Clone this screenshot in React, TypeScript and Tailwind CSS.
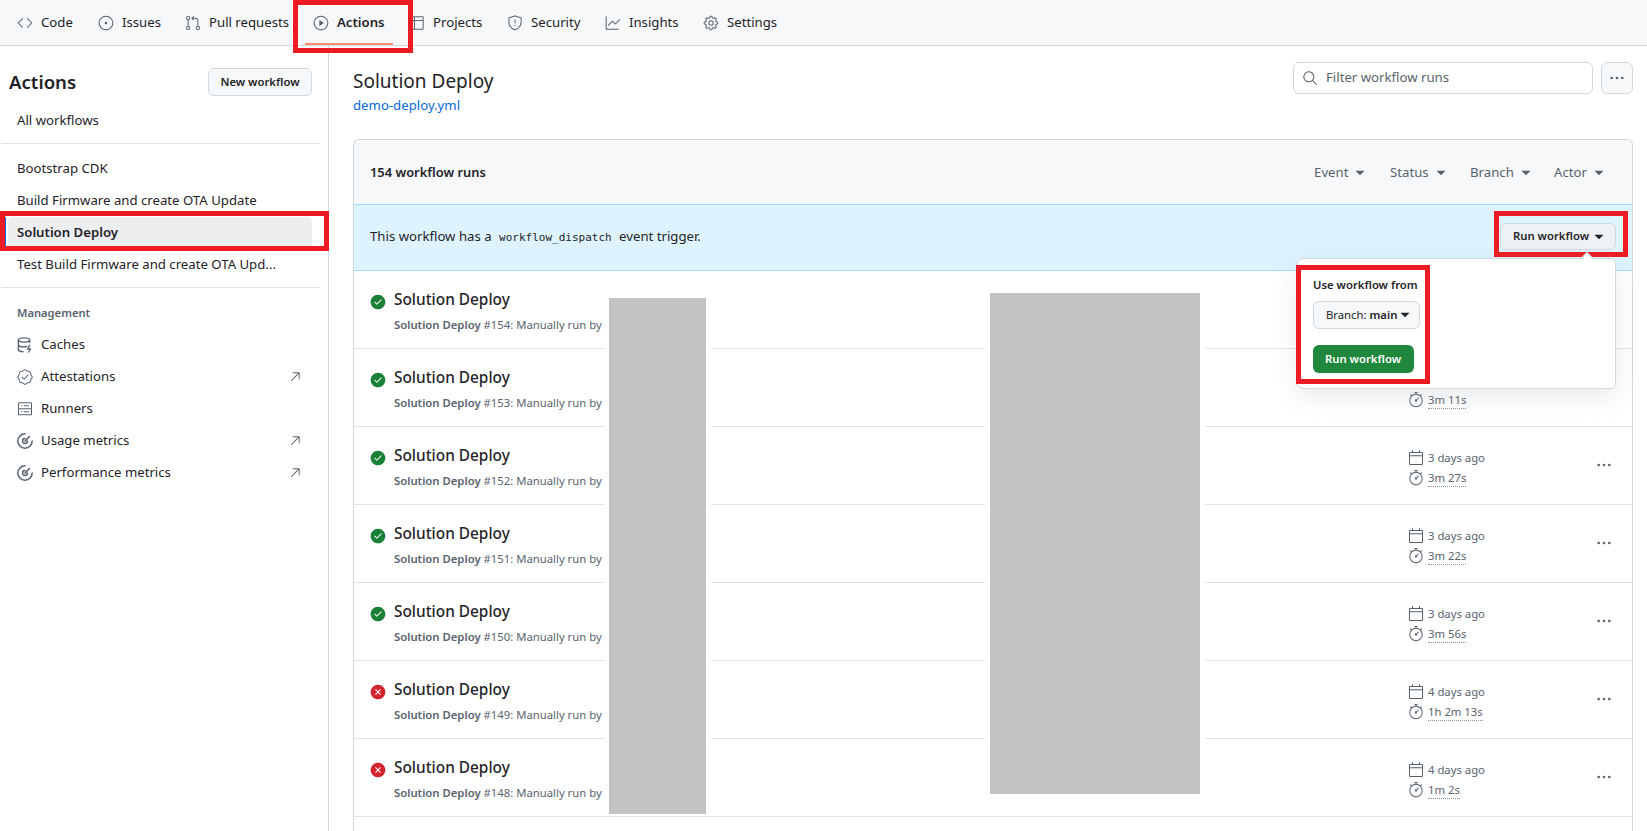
import type { ReactNode } from "react";
import {
  GoArrowUpRight, GoCalendar, GoCheckCircleFill, GoCode, GoGear, GoGitPullRequest, GoGraph,
  GoIssueOpened, GoKebabHorizontal, GoPlay, GoSearch, GoServer, GoShield, GoStopwatch, GoTable,
  GoTriangleDown, GoVerified, GoXCircleFill,
} from "react-icons/go";

function CacheIcon() {
  return (
    <svg width="16" height="16" viewBox="0 0 16 16" fill="none" stroke="currentColor" strokeWidth="1.4" strokeLinecap="round">
      <ellipse cx="7" cy="3" rx="5.6" ry="2.1" />
      <path d="M1.4 3v9.6c0 1.2 2 2.1 4.6 2.1M1.4 7.8c0 1.2 2.3 2.1 5.2 2.1 1.2 0 2.4-.2 3.3-.5M12.6 3v2.6" />
      <path d="M12.8 8.2 10.4 12h3.2l-2 3" strokeWidth="1.3" strokeLinejoin="round" />
    </svg>
  );
}

function MeterIcon() {
  return (
    <svg width="16" height="16" viewBox="0 0 16 16" fill="none" stroke="currentColor" strokeWidth="1.5" strokeLinecap="round">
      <path d="M15.2 8A7.2 7.2 0 1 1 8 .8" />
      <path d="M10.4 8A2.4 2.4 0 1 1 8 5.6" />
      <path d="M8 8 12.4 3.6" />
    </svg>
  );
}

const tabs = [
  { label: "Code", icon: <GoCode size={16} />, width: "w-[73px]" },
  { label: "Issues", icon: <GoIssueOpened size={16} />, width: "w-[79px]" },
  { label: "Pull requests", icon: <GoGitPullRequest size={16} />, width: "w-[120px]" },
  { label: "Actions", icon: <GoPlay size={16} />, width: "w-[88px]", active: true },
  { label: "Projects", icon: <GoTable size={16} />, width: "w-[90px]" },
  { label: "Security", icon: <GoShield size={16} />, width: "w-[90px]" },
  { label: "Insights", icon: <GoGraph size={16} />, width: "w-[90px]" },
  { label: "Settings", icon: <GoGear size={16} />, width: "w-[90px]" },
];

const workflows = ["Bootstrap CDK", "Build Firmware and create OTA Update", "Solution Deploy", "Test Build Firmware and create OTA Upd..."];

const management = [
  { label: "Caches", icon: <CacheIcon /> },
  { label: "Attestations", icon: <GoVerified size={16} />, external: true },
  { label: "Runners", icon: <GoServer size={16} /> },
  { label: "Usage metrics", icon: <MeterIcon />, external: true },
  { label: "Performance metrics", icon: <MeterIcon />, external: true },
];

const filters = [
  { label: "Event", width: "w-[76px]" },
  { label: "Status", width: "w-[80px]" },
  { label: "Branch", width: "w-[84px]" },
  { label: "Actor", width: "" },
];

const runs = [
  { id: 154, ok: true, date: "3 days ago", time: "3m 2s" },
  { id: 153, ok: true, date: "3 days ago", time: "3m 11s" },
  { id: 152, ok: true, date: "3 days ago", time: "3m 27s" },
  { id: 151, ok: true, date: "3 days ago", time: "3m 22s" },
  { id: 150, ok: true, date: "3 days ago", time: "3m 56s" },
  { id: 149, ok: false, date: "4 days ago", time: "1h 2m 13s" },
  { id: 148, ok: false, date: "4 days ago", time: "1m 2s" },
];

function Caret() {
  return <GoTriangleDown size={16} className="shrink-0" />;
}

function SideRow({ children, selected }: { children: ReactNode; selected?: boolean }) {
  return (
    <div className={`relative mx-2 flex h-8 w-[304px] items-center gap-2 rounded-md px-[9px] ${selected ? "bg-[#eceef0] font-semibold" : ""}`}>
      {selected && <span className="absolute -left-1 top-0 h-8 w-0.5 rounded bg-[#0969da]" />}
      {children}
    </div>
  );
}

function RunRow({ run }: { run: (typeof runs)[number] }) {
  return (
    <div className="flex h-[78px] shrink-0 border-b border-[#dde3e8]">
      <div className="ml-4 mt-[23px] shrink-0">
        {run.ok ? <GoCheckCircleFill size={16} className="text-[#1a7f37]" /> : <GoXCircleFill size={16} className="text-[#d1242f]" />}
      </div>
      <div className="ml-2 mt-[14px]">
        <div className="text-[15.4px] font-medium leading-[30px] text-[#1f2328]">Solution Deploy</div>
        <div className="mt-px text-[11.3px] leading-[18px] text-[#59636e]">
          <span className="font-semibold">Solution Deploy</span> #{run.id}: Manually run by
        </div>
      </div>
      <div className="ml-auto flex w-[224px] shrink-0 justify-between pr-5">
        <div className="mt-[19px] text-[11.3px] leading-[23px] text-[#59636e]">
          <div className="flex items-center gap-1"><GoCalendar size={16} />{run.date}</div>
          <div className="flex items-center gap-1">
            <GoStopwatch size={16} />
            <span className="border-b border-dotted border-[#8c959f] leading-[17px]">{run.time}</span>
          </div>
        </div>
        <div className="mt-[30px] text-[#59636e]"><GoKebabHorizontal size={16} /></div>
      </div>
    </div>
  );
}

export default function App() {
  return (
    <div className="relative h-[831px] overflow-hidden bg-white font-['Noto_Sans',sans-serif] text-[13.2px] text-[#1f2328]">
      <nav className="flex h-[46px] gap-2 border-b border-[#d1d9e0] bg-[#f6f8fa] pl-[9px]">
        {tabs.map((t) => (
          <div key={t.label} className={`relative flex h-[45px] items-center gap-2 px-2 ${t.width} ${t.active ? "font-semibold" : ""}`}>
            <span className="text-[#59636e]">{t.icon}</span>
            <span className="whitespace-nowrap">{t.label}</span>
            {t.active && <span className="absolute inset-x-0 bottom-0 h-0.5 bg-[#fd8c73]" />}
          </div>
        ))}
      </nav>

      <div className="flex h-[785px]">
        <aside className="w-[329px] shrink-0 border-r border-[#d1d9e0]">
          <div className="flex items-center justify-between pl-[9px] pr-4 pt-[22px]">
            <h1 className="text-[18.6px] font-semibold leading-7">Actions</h1>
            <button className="h-7 w-[104px] rounded-md border border-[#d1d9e0] bg-[#f6f8fa] text-[11.3px] font-semibold">New workflow</button>
          </div>
          <div className="mt-[9px]"><SideRow>All workflows</SideRow></div>
          <div className="mb-[9px] ml-px mt-1.5 h-px w-[319px] bg-[#dde3e8]" />
          {workflows.map((w) => (
            <SideRow key={w} selected={w === "Solution Deploy"}><span className="whitespace-nowrap">{w}</span></SideRow>
          ))}
          <div className="mb-[9px] ml-px mt-1.5 h-px w-[319px] bg-[#dde3e8]" />
          <div className="ml-[17px] flex h-8 items-center text-[11.2px] font-semibold text-[#59636e]">Management</div>
          {management.map((m) => (
            <SideRow key={m.label}>
              <span className="text-[#59636e]">{m.icon}</span>
              {m.label}
              {m.external && <GoArrowUpRight size={16} className="ml-auto text-[#59636e]" />}
            </SideRow>
          ))}
        </aside>

        <main className="min-w-0 flex-1 pl-6 pr-3.5">
          <div className="flex items-start justify-between pt-[15px]">
            <div>
              <h2 className="text-[19px] leading-[40px]">Solution Deploy</h2>
              <a className="-mt-px block leading-[10px] text-[#0969da]">demo-deploy.yml</a>
            </div>
            <div className="mt-px flex gap-2">
              <div className="flex h-8 w-[300px] items-center gap-2 rounded-md border border-[#d1d9e0] pl-2 text-[#59636e]">
                <GoSearch size={16} />Filter workflow runs
              </div>
              <div className="flex h-8 w-8 items-center justify-center rounded-md border border-[#d1d9e0] bg-[#f6f8fa] text-[#59636e]">
                <GoKebabHorizontal size={16} />
              </div>
            </div>
          </div>

          <section className="mt-[29px] h-[700px] rounded-t-md border-x border-t border-[#d1d9e0]">
            <div className="flex h-16 items-center justify-between rounded-t-md bg-[#f6f8fa] pl-4 pr-[25px] pt-0.5">
              <span className="text-[12.9px] font-semibold">154 workflow runs</span>
              <div className="flex text-[#59636e]">
                {filters.map((f) => (
                  <span key={f.label} className={`flex items-center gap-1 ${f.width}`}>{f.label}<Caret /></span>
                ))}
              </div>
            </div>
            <div className="relative flex h-[67px] items-center justify-between border-y border-[#a8dcff] bg-[#ddf4ff] pb-0.5 pl-4 pr-4">
              <span>
                This workflow has a{" "}
                <code className="mx-1 font-['DejaVu_Sans_Mono',monospace] text-[11px]">workflow_dispatch</code>
                {" "}event trigger.
              </span>
              <button className="flex h-[27px] w-[116px] items-center gap-0.5 rounded-md border border-[#d1d9e0] bg-[#eff2f5] pl-3 text-[11.3px] font-semibold">
                Run workflow <Caret />
              </button>
              <div className="absolute right-4 top-[53px] z-10 h-[131px] w-[319px] rounded-md border border-[#d1d9e0] bg-white pl-[15px] pt-[16px] shadow-[0_8px_24px_rgba(140,149,159,0.2)]">
                <span className="absolute -top-[5px] right-[23px] h-2.5 w-2.5 rotate-45 border-l border-t border-[#d1d9e0] bg-white" />
                <div className="text-[11.3px] font-semibold leading-5">Use workflow from</div>
                <button className="mt-1.5 flex h-7 w-[107px] items-center rounded-md border border-[#d1d9e0] bg-[#f6f8fa] pl-3 text-[11.3px]">
                  Branch:&nbsp;<span className="font-semibold">main</span><Caret />
                </button>
                <button className="mt-4 h-7 w-[101px] rounded-md bg-[#1f883d] pl-3 text-left text-[11.3px] font-semibold text-white">Run workflow</button>
              </div>
            </div>
            <div className="flex flex-col">
              {runs.map((r) => <RunRow key={r.id} run={r} />)}
            </div>
          </section>
        </main>
      </div>

      {/* redactions painted over the screenshot */}
      <div className="absolute left-[604px] top-[290px] h-[510px] w-[107px] bg-white" />
      <div className="absolute left-[609px] top-[298px] h-[516px] w-[97px] bg-[#c3c3c3]" />
      <div className="absolute left-[985px] top-[290px] h-[510px] w-[220px] bg-white" />
      <div className="absolute left-[990px] top-[293px] h-[501px] w-[210px] bg-[#c3c3c3]" />

      {/* red annotation frames */}
      <div className="absolute left-[293px] top-0 h-[53px] w-[120px] border-[5px] border-[#ed1c24]" />
      <div className="absolute left-0 top-[211px] h-[40px] w-[329px] border-[5px] border-[#ed1c24]" />
      <div className="absolute left-[1494px] top-[211px] h-[46px] w-[134px] border-[5px] border-[#ed1c24]" />
      <div className="absolute left-[1296px] top-[265px] z-20 h-[119px] w-[134px] border-[5px] border-[#ed1c24]" />
    </div>
  );
}
